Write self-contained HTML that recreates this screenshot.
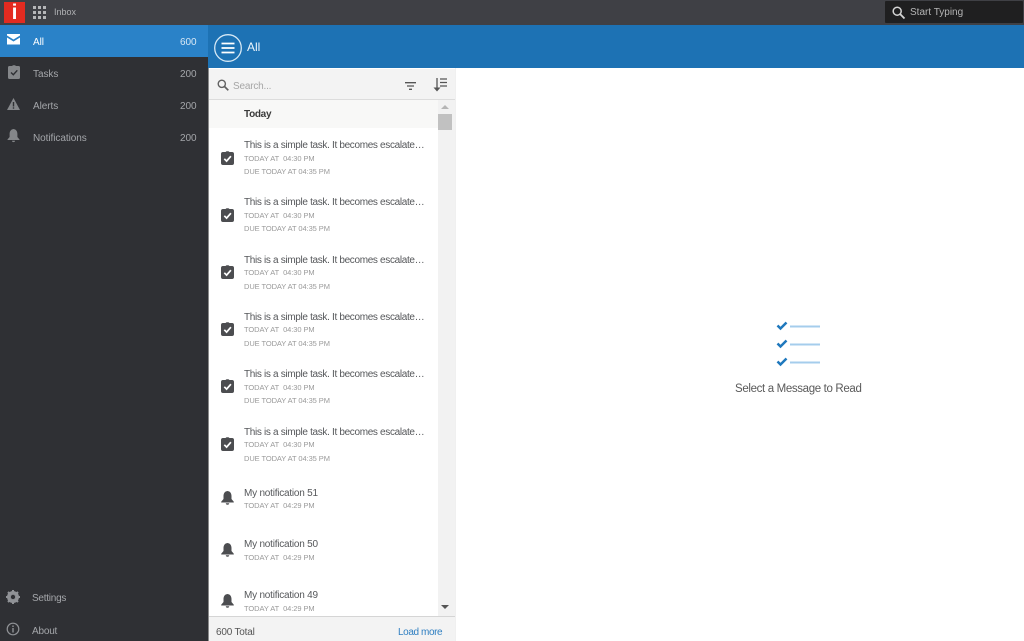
<!DOCTYPE html>
<html><head><meta charset="utf-8">
<style>
html,body{margin:0;padding:0;width:1024px;height:641px;overflow:hidden;background:#fff;font-family:"Liberation Sans",sans-serif}
#w{position:absolute;left:0;top:0;width:1024px;height:641px;overflow:hidden;filter:blur(.35px)}
.a{position:absolute}
.t{position:absolute;white-space:nowrap;line-height:12px}
svg{position:absolute;overflow:visible}
.side{font-size:10px;color:#a4a6aa;margin-top:2px;letter-spacing:-.06px}
.title{font-size:10px;color:#55575a;left:244px;margin-top:4px;letter-spacing:-.33px}
.n{letter-spacing:-.22px}
.sub{font-size:7.5px;color:#9a9a9a;left:244px;margin-top:1px;letter-spacing:-.08px}
</style></head><body><div id="w">
<div class="a" style="left:0;top:0;width:1024px;height:25px;background:#3f4045"></div>
<div class="a" style="left:0;top:25px;width:208px;height:616px;background:#2f3034"></div>
<div class="a" style="left:0;top:25px;width:208px;height:32px;background:#2a82c8"></div>
<div class="a" style="left:208px;top:25px;width:816px;height:43px;background:#1d72b4"></div>
<div class="a" style="left:208px;top:68px;width:1px;height:573px;background:#8a8a8a"></div>
<!-- logo -->
<div class="a" style="left:4px;top:2px;width:21px;height:21px;background:#e32b20"></div>
<div class="t" style="left:4px;top:2px;width:21px;text-align:center;font:bold 21px/21px 'Liberation Sans',sans-serif;color:#fff">i</div>
<svg style="left:33px;top:6px" width="13" height="13" fill="#b5b6b8"><rect x="0" y="0" width="3" height="3"/><rect x="5" y="0" width="3" height="3"/><rect x="10" y="0" width="3" height="3"/><rect x="0" y="5" width="3" height="3"/><rect x="5" y="5" width="3" height="3"/><rect x="10" y="5" width="3" height="3"/><rect x="0" y="10" width="3" height="3"/><rect x="5" y="10" width="3" height="3"/><rect x="10" y="10" width="3" height="3"/></svg>
<div class="t" style="left:54px;top:6px;font-size:9px;color:#b0b1b4">Inbox</div>
<!-- top search -->
<div class="a" style="left:885px;top:1px;width:138px;height:22px;background:#1f1f20;border-radius:1px"></div>
<svg style="left:892px;top:6px" width="13" height="13" fill="none" stroke="#d5d5d5" stroke-width="1.500"><circle cx="5.200" cy="5.200" r="4"/><path d="M8.300 8.300L12.500 12.500" stroke-width="1.800"/></svg>
<div class="t" style="left:910px;top:7px;font-size:10px;color:#b5b5b5">Start Typing</div>
<!-- sidebar -->
<svg style="left:7px;top:34px" width="13" height="11"><path d="M0 0H13V1.500L6.500 5.500L0 1.500Z" fill="#fff"/><path d="M0 3.500L6.500 7.500L13 3.500V10.500H0Z" fill="#fff"/></svg>
<div class="t side" style="left:33px;top:35px;color:#fff">All</div>
<div class="t side" style="left:180px;top:35px;color:#d8e8f5">600</div>
<svg style="left:8px;top:65px" width="12" height="14"><path d="M1.500 1H4L5 .3H7L8 1H10.500A1.500 1.500 0 0 1 12 2.500V12.500A1.500 1.500 0 0 1 10.500 14H1.500A1.500 1.500 0 0 1 0 12.500V2.500A1.500 1.500 0 0 1 1.500 1Z" fill="#85878a"/><path d="M3 7.500L5.300 9.700L9.300 5.300" fill="none" stroke="#2f3034" stroke-width="1.400"/></svg>
<div class="t side" style="left:33px;top:67px">Tasks</div>
<div class="t side" style="left:180px;top:67px">200</div>
<svg style="left:7px;top:98px" width="13" height="12"><path d="M6.500 0L13 12H0Z" fill="#85878a"/><rect x="5.800" y="4" width="1.400" height="4.500" fill="#2f3034"/><rect x="5.800" y="9.300" width="1.400" height="1.400" fill="#2f3034"/></svg>
<div class="t side" style="left:33px;top:99px">Alerts</div>
<div class="t side" style="left:180px;top:99px">200</div>
<svg style="left:7px;top:129px" width="13" height="13"><path d="M6.500 0C9 .3 10.400 2.300 10.400 5V8L12.500 10.500V11H.5V10.500L2.600 8V5C2.600 2.300 4 .3 6.500 0Z" fill="#85878a"/><path d="M5 11.800H8A1.500 1.300 0 0 1 5 11.800Z" fill="#85878a"/></svg>
<div class="t side" style="left:33px;top:131px">Notifications</div>
<div class="t side" style="left:180px;top:131px">200</div>
<svg style="left:6px;top:590px" width="14" height="14"><circle cx="7" cy="7" r="4.500" fill="none" stroke="#909296" stroke-width="3"/><path d="M7 0V14M0 7H14M2 2L12 12M12 2L2 12" stroke="#909296" stroke-width="2"/><circle cx="7" cy="7" r="2.200" fill="#2f3034"/></svg>
<div class="t side" style="left:32px;top:591px;letter-spacing:-.25px">Settings</div>
<svg style="left:6px;top:622px" width="14" height="14" fill="none" stroke="#909296"><circle cx="7" cy="7" r="5.800" stroke-width="1.200"/><path d="M7 6V10.500" stroke-width="1.400"/><path d="M7 3.500V5" stroke-width="1.400"/></svg>
<div class="t side" style="left:32px;top:624px;letter-spacing:-.2px">About</div>
<!-- header -->
<svg style="left:214px;top:33px" width="29" height="30" fill="none" stroke="#d5e8f5"><circle cx="14" cy="15" r="13.300" stroke-width="1.300"/><path d="M7.500 10.500H20.500M7.500 15H20.500M7.500 19.500H20.500" stroke="#fff" stroke-width="1.700"/></svg>
<div class="t" style="left:247px;top:41px;font-size:12px;color:#eef6fc">All</div>
<!-- search -->
<div class="a" style="left:209px;top:69px;width:246px;height:30px;background:#f3f3f3;border-bottom:1px solid #dcdcdc"></div>
<svg style="left:217px;top:79px" width="12" height="12" fill="none" stroke="#616161"><circle cx="4.800" cy="4.800" r="3.600" stroke-width="1.400"/><path d="M7.500 7.500L11.300 11.300" stroke-width="1.700"/></svg>
<div class="t" style="left:233px;top:81px;font-size:10px;color:#a6a6a6;letter-spacing:-.2px">Search...</div>
<svg style="left:405px;top:82px" width="11" height="8" stroke="#555"><path d="M0 .7H11M2 4H9M4 7.300H7" stroke-width="1.300"/></svg>
<svg style="left:433px;top:78px" width="14" height="14" stroke="#555" fill="none"><path d="M4 0V12" stroke-width="1.300"/><path d="M.5 9.500L4 13.500L7.500 9.500Z" fill="#555" stroke="none"/><path d="M7 1H14M7 4.500H14M7 8H14" stroke-width="1.300"/></svg>
<!-- today -->
<div class="a" style="left:209px;top:100px;width:229px;height:28px;background:#f8f8f7"></div>
<div class="t" style="left:244px;top:109px;font-size:10px;font-weight:bold;color:#3a3a3a;letter-spacing:-.3px">Today</div>
<!-- scrollbar -->
<div class="a" style="left:438px;top:100px;width:17px;height:516px;background:#f2f2f2"></div>
<div class="a" style="left:438px;top:114px;width:14px;height:16px;background:#c1c1c1"></div>
<svg style="left:441px;top:105px" width="8" height="5"><path d="M0 4L4 0L8 4Z" fill="#b5b5b5"/></svg>
<svg style="left:441px;top:605px" width="8" height="5"><path d="M0 0L8 0L4 4Z" fill="#555"/></svg>
<!-- tasks -->
<svg style="left:221px;top:151px" width="13" height="14"><use href="#c"/><defs><g id="c"><path d="M2 1H4.500L5.500 .2H7.500L8.500 1H11A2 2 0 0 1 13 3V12A2 2 0 0 1 11 14H2A2 2 0 0 1 0 12V3A2 2 0 0 1 2 1Z" fill="#4c4d50"/><path d="M3.300 7.800L5.600 10.100L9.900 5.200" fill="none" stroke="#fff" stroke-width="1.700"/></g><g id="b"><path d="M6.500 0C9.200.3 10.500 2.500 10.500 5V8L12.800 10.700V11.500H.2V10.700L2.500 8V5C2.500 2.500 3.800.3 6.500 0Z" fill="#4c4d50"/><path d="M4.800 12.300H8.200A1.700 1.500 0 0 1 4.800 12.300Z" fill="#4c4d50"/></g></defs></svg>
<svg style="left:221px;top:208px" width="13" height="14"><use href="#c"/></svg>
<svg style="left:221px;top:265px" width="13" height="14"><use href="#c"/></svg>
<svg style="left:221px;top:322px" width="13" height="14"><use href="#c"/></svg>
<svg style="left:221px;top:379px" width="13" height="14"><use href="#c"/></svg>
<svg style="left:221px;top:437px" width="13" height="14"><use href="#c"/></svg>

<div class="t title" style="top:136px">This is a simple task. It becomes escalate…</div>
<div class="t sub" style="top:152px">TODAY AT&nbsp; 04:30 PM</div>
<div class="t sub" style="top:165px">DUE TODAY AT 04:35 PM</div>
<div class="t title" style="top:193px">This is a simple task. It becomes escalate…</div>
<div class="t sub" style="top:209px">TODAY AT&nbsp; 04:30 PM</div>
<div class="t sub" style="top:222px">DUE TODAY AT 04:35 PM</div>
<div class="t title" style="top:251px">This is a simple task. It becomes escalate…</div>
<div class="t sub" style="top:266px">TODAY AT&nbsp; 04:30 PM</div>
<div class="t sub" style="top:280px">DUE TODAY AT 04:35 PM</div>
<div class="t title" style="top:308px">This is a simple task. It becomes escalate…</div>
<div class="t sub" style="top:323px">TODAY AT&nbsp; 04:30 PM</div>
<div class="t sub" style="top:337px">DUE TODAY AT 04:35 PM</div>
<div class="t title" style="top:365px">This is a simple task. It becomes escalate…</div>
<div class="t sub" style="top:381px">TODAY AT&nbsp; 04:30 PM</div>
<div class="t sub" style="top:394px">DUE TODAY AT 04:35 PM</div>
<div class="t title" style="top:423px">This is a simple task. It becomes escalate…</div>
<div class="t sub" style="top:438px">TODAY AT&nbsp; 04:30 PM</div>
<div class="t sub" style="top:452px">DUE TODAY AT 04:35 PM</div>

<svg style="left:221px;top:491px" width="13" height="14"><use href="#b"/></svg>
<svg style="left:221px;top:543px" width="13" height="14"><use href="#b"/></svg>
<svg style="left:221px;top:594px" width="13" height="14"><use href="#b"/></svg>
<div class="t title n" style="top:484px">My notification 51</div>
<div class="t sub" style="top:499px">TODAY AT&nbsp; 04:29 PM</div>
<div class="t title n" style="top:535px">My notification 50</div>
<div class="t sub" style="top:551px">TODAY AT&nbsp; 04:29 PM</div>
<div class="t title n" style="top:586px">My notification 49</div>
<div class="t sub" style="top:602px">TODAY AT&nbsp; 04:29 PM</div>
<!-- footer -->
<div class="a" style="left:209px;top:616px;width:246px;height:25px;background:#f3f3f3;border-top:1px solid #d5d5d5;box-sizing:border-box"></div>
<div class="t" style="left:216px;top:627px;font-size:10px;color:#555;letter-spacing:-.2px">600 Total</div>
<div class="t" style="left:398px;top:627px;font-size:10px;color:#2f7fc1;letter-spacing:-.4px">Load more</div>
<div class="a" style="left:455px;top:68px;width:1px;height:573px;background:#f0f0f0"></div>
<!-- empty state -->
<svg style="left:776px;top:320px" width="45" height="48" fill="none"><path d="M1.500 5.500L4.500 8.500L10.500 2.500M1.500 23.500L4.500 26.500L10.500 20.500M1.500 41.500L4.500 44.500L10.500 38.500" stroke="#1f78bd" stroke-width="2.500"/><path d="M14 6.500H44M14 24.500H44M14 42.500H44" stroke="#a5cdec" stroke-width="2"/></svg>
<div class="t" style="left:735px;top:383px;font-size:11.500px;color:#5a5a5a;letter-spacing:-.35px">Select a Message to Read</div>
</div></body></html>
